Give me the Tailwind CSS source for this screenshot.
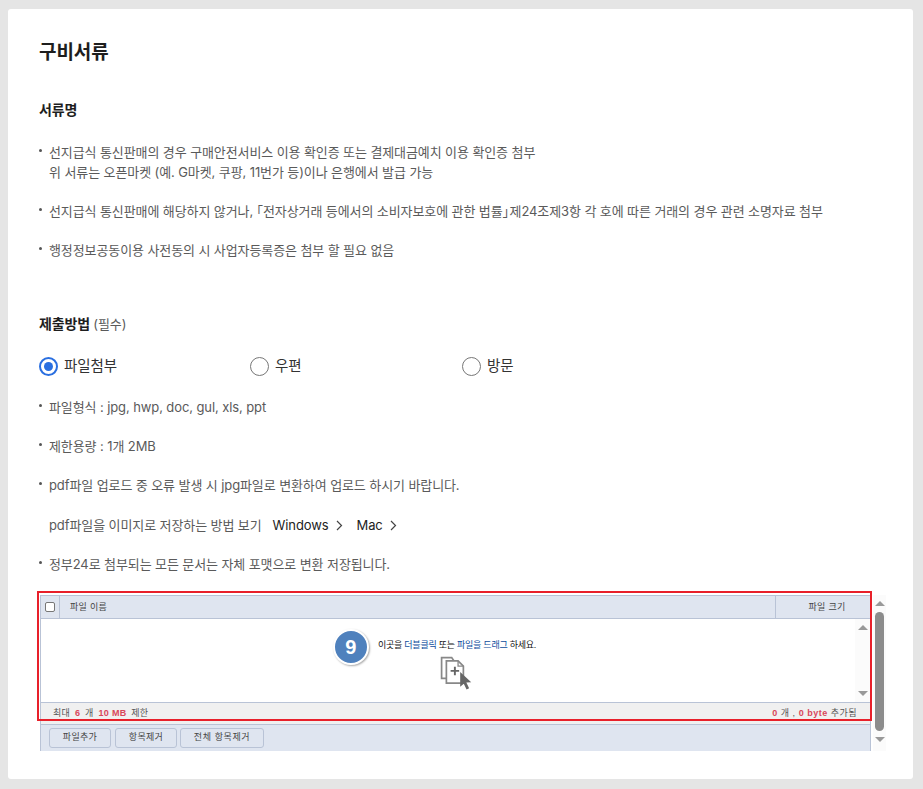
<!DOCTYPE html>
<html lang="ko">
<head>
<meta charset="UTF-8">
<title>구비서류</title>
<script src="https://cdn.jsdelivr.net/npm/@tailwindcss/browser@4"></script>
</head>
<body class="bg-[#e5e5e5] font-['Inter','Noto_Sans_CJK_KR',sans-serif] text-[13px] tracking-[-0.1px] text-[#5a5a5a] h-[789px] overflow-hidden">
  <div class="relative ml-[8px] mt-[9px] w-[905px] h-[770px] bg-white rounded-[3px] pl-[31px] pt-[31px] [display:flow-root]">

    <h1 class="text-[19px] leading-[26px] font-bold text-[#1e1e1e]">구비서류</h1>

    <h2 class="mt-[33px] text-[14px] leading-[22px] font-bold text-[#1e1e1e]">서류명</h2>

    <ul class="mt-[21px] flex flex-col gap-[19px]">
      <li class="flex gap-[7px] leading-[20px]">
        <span class="mt-[7px] w-[3px] h-[3px] bg-[#555] rounded-full shrink-0"></span>
        <p>선지급식 통신판매의 경우 구매안전서비스 이용 확인증 또는 결제대금예치 이용 확인증 첨부<br>위 서류는 오픈마켓 (예. G마켓, 쿠팡, 11번가 등)이나 은행에서 발급 가능</p>
      </li>
      <li class="flex gap-[7px] leading-[20px]">
        <span class="mt-[7px] w-[3px] h-[3px] bg-[#555] rounded-full shrink-0"></span>
        <p>선지급식 통신판매에 해당하지 않거나,<span class="ml-[-3px]">「</span>전자상거래 등에서의 소비자보호에 관한 법률<span class="tracking-[-6px]">」</span>제24조제3항 각 호에 따른 거래의 경우 관련 소명자료 첨부</p>
      </li>
      <li class="flex gap-[7px] leading-[20px]">
        <span class="mt-[7px] w-[3px] h-[3px] bg-[#555] rounded-full shrink-0"></span>
        <p>행정정보공동이용 사전동의 시 사업자등록증은 첨부 할 필요 없음</p>
      </li>
    </ul>

    <h2 class="mt-[53px] text-[14px] leading-[22px] font-bold text-[#1e1e1e]">제출방법 <span class="text-[13px] font-normal text-[#5a5a5a]">(필수)</span></h2>

    <div class="mt-[21px] flex text-[14.5px] text-[#333] leading-[20px]">
      <label class="w-[211px] flex items-center gap-[6px]">
        <span class="w-[19px] h-[19px] rounded-full border-2 border-[#2a6fe0] flex items-center justify-center"><span class="w-[9px] h-[9px] rounded-full bg-[#2a6fe0]"></span></span>
        파일첨부
      </label>
      <label class="w-[212px] flex items-center gap-[6px]">
        <span class="w-[19px] h-[19px] rounded-full border border-[#777]"></span>
        우편
      </label>
      <label class="flex items-center gap-[6px]">
        <span class="w-[19px] h-[19px] rounded-full border border-[#777]"></span>
        방문
      </label>
    </div>

    <ul class="mt-[21px] flex flex-col gap-[18px] leading-[21px]">
      <li class="flex gap-[7px]"><span class="mt-[7px] w-[3px] h-[3px] bg-[#555] rounded-full shrink-0"></span><p>파일형식 : jpg, hwp, doc, gul, xls, ppt</p></li>
      <li class="flex gap-[7px]"><span class="mt-[7px] w-[3px] h-[3px] bg-[#555] rounded-full shrink-0"></span><p>제한용량 : 1개 2MB</p></li>
      <li class="flex gap-[7px]"><span class="mt-[7px] w-[3px] h-[3px] bg-[#555] rounded-full shrink-0"></span><p>pdf파일 업로드 중 오류 발생 시 jpg파일로 변환하여 업로드 하시기 바랍니다.</p></li>
      <li class="flex items-center pl-[10px] pt-[1px]">
        <span>pdf파일을 이미지로 저장하는 방법 보기</span>
        <a class="ml-[11px] flex items-center gap-[7px] text-[#222]">Windows
          <svg width="7" height="11" viewBox="0 0 7 11" fill="none" stroke="#444" stroke-width="1.2"><path d="M1 1l4.5 4.5L1 10"/></svg>
        </a>
        <a class="ml-[14px] flex items-center gap-[7px] text-[#222]">Mac
          <svg width="7" height="11" viewBox="0 0 7 11" fill="none" stroke="#444" stroke-width="1.2"><path d="M1 1l4.5 4.5L1 10"/></svg>
        </a>
      </li>
      <li class="flex gap-[7px]"><span class="mt-[7px] w-[3px] h-[3px] bg-[#555] rounded-full shrink-0"></span><p>정부24로 첨부되는 모든 문서는 자체 포맷으로 변환 저장됩니다.</p></li>
    </ul>

    <!-- upload widget with its outer scrollbar -->
    <div class="absolute left-[32px] top-[586px] flex font-['Liberation_Sans','Noto_Sans_CJK_KR',sans-serif] text-[9px] tracking-[0.3px] text-[#444]">
      <div class="w-[831px] h-[156px] flex flex-col">
        <div class="h-[24px] flex bg-[#dfe5f0] border border-[#b9c3d6] leading-[22px]">
          <div class="w-[19px] border-r border-[#b9c3d6] flex items-center justify-center">
            <span class="w-[10px] h-[10px] bg-white border border-[#777] rounded-[2px]"></span>
          </div>
          <div class="flex-1 pl-[10px]">파일 이름</div>
          <div class="w-[95px] border-l border-[#b9c3d6] text-center pl-[8px]">파일 크기</div>
        </div>
        <div class="h-[84px] flex bg-white border-x border-[#b9c3d6] border-b">
          <div class="flex-1 relative">
            <div class="absolute left-[292px] top-[10px] w-[36px] h-[36px] rounded-full bg-[#4f81bd] border-[2px] border-white shadow-[1px_1px_2px_#aaa] flex items-center justify-center text-white text-[20px] font-bold font-['Liberation_Sans']">9</div>
            <p class="absolute left-[337px] top-[20px] text-[#111] tracking-[-0.25px] whitespace-nowrap leading-[12px]">이곳을 <span class="text-[#0b4c9c]">더블클릭</span> 또는 <span class="text-[#0b4c9c]">파일을 드래그</span> 하세요.</p>
            <svg class="absolute left-[399px] top-[37px]" width="34" height="34" viewBox="0 0 32 32" fill="none">
              <path d="M7 21H1.5V1.5H11l2 3" stroke="#888" stroke-width="1.6"/>
              <path d="M6 4.5h11l5 5v16H6z" fill="#fff" stroke="#888" stroke-width="1.6"/>
              <path d="M17 4.5v5h5" stroke="#888" stroke-width="1.2"/>
              <path d="M14 10v8M10 14h8" stroke="#666" stroke-width="1.8"/>
              <path d="M19 15l0 14 3.4-3 2.6 5.5 2.4-1.2-2.6-5.3 4.6-.4z" fill="#666"/>
            </svg>
          </div>
          <div class="w-[15px] bg-[#fbfbfb] flex flex-col items-center justify-between py-[6px]">
            <span class="w-0 h-0 border-x-[5px] border-x-transparent border-b-[5px] border-b-[#999]"></span>
            <span class="w-0 h-0 border-x-[5px] border-x-transparent border-t-[5px] border-t-[#999]"></span>
          </div>
        </div>
        <div class="h-[21px] flex justify-between bg-[#f0f0f0] border-x border-[#b9c3d6] pl-[12px] pr-[13px] leading-[21px] text-[#555]">
          <span class="tracking-[0.3px]">최대 <b class="text-[#d9475a] mx-[2px]">6</b> 개 <b class="text-[#d9475a] mx-[2px]">10 MB</b> 제한</span>
          <span class="tracking-[0.5px]"><b class="text-[#d9475a]">0</b> 개 , <b class="text-[#d9475a]">0 byte</b> 추가됨</span>
        </div>
        <div class="flex-1 flex gap-[4px] bg-[#dfe5f0] border-x border-t border-[#b9c3d6] pl-[8px] pt-[3px]">
          <button class="w-[62px] h-[20px] bg-[#dfe5f0] border border-[#b9c3d6] rounded-[3px]">파일추가</button>
          <button class="w-[62px] h-[20px] bg-[#dfe5f0] border border-[#b9c3d6] rounded-[3px]">항목제거</button>
          <button class="w-[84px] h-[20px] ml-[-1px] bg-[#dfe5f0] border border-[#b9c3d6] rounded-[3px] tracking-[0.6px]">전체 항목제거</button>
        </div>
      </div>
      <div class="ml-[2px] w-[13px] h-[156px] bg-[#fbfbfb] flex flex-col items-center">
        <span class="mt-[6px] w-0 h-0 border-x-[5px] border-x-transparent border-b-[5px] border-b-[#999]"></span>
        <span class="mt-[6px] w-[9px] h-[119px] rounded-full bg-[#8c8c8c]"></span>
        <span class="mt-[6px] w-0 h-0 border-x-[5px] border-x-transparent border-t-[5px] border-t-[#999]"></span>
      </div>
    </div>

    <!-- red highlight over the widget -->
    <div class="absolute left-[29px] top-[582px] w-[835px] h-[130px] border-[2px] border-[#e8202a] pointer-events-none"></div>
  </div>
</body>
</html>
